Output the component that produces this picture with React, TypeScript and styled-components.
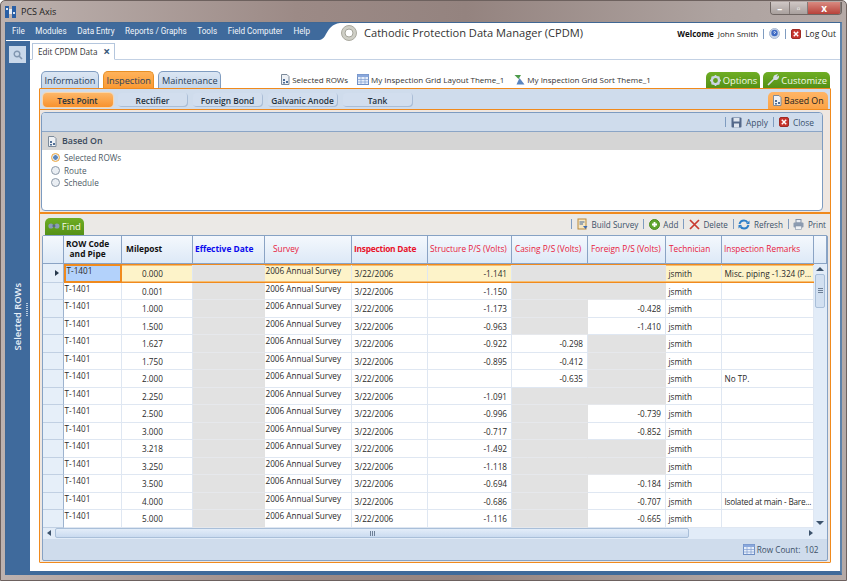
import React from "react";
import styled, { createGlobalStyle } from "styled-components";

const Global = createGlobalStyle`
  html, body { margin: 0; padding: 0; width: 847px; height: 581px; overflow: hidden; }
  body { font-family: "Open Sans", "Liberation Sans", sans-serif; color: #222; }
  * { box-sizing: border-box; }
`;

const Window = styled.div`
  width: 847px; height: 581px; display: flex; flex-direction: column;
  padding: 0 4px 5px 4px; border: 1px solid #6d615e; border-radius: 5px 5px 0 0;
  background: linear-gradient(90deg, #bdb2af 0%, #9c8a86 35%, #94837f 55%, #aea3a0 85%, #b5aaa7 100%);
`;
const TitleBar = styled.div`
  height: 21px; flex: none; display: flex; align-items: center; gap: 5px; font-size: 9px; color: #222;
`;
const TitleText = styled.span` flex: 1; `;
const WinControls = styled.div`
  display: flex; height: 13px; width: 72px; align-self: flex-start; border: 1px solid #6e6562; border-top: none;
  border-radius: 0 0 4px 4px; overflow: hidden; margin-right: 0; margin-top: 1px;
`;
const WinBtn = styled.div<{ $close?: boolean }>`
  flex: ${p => (p.$close ? 1.8 : 1)}; display: flex; align-items: center; justify-content: center;
  background: ${p => (p.$close ? "linear-gradient(#d98a80, #b8423a)" : "linear-gradient(#cfc7c5, #a9a09d)")};
  border-right: 1px solid #857b78; color: #fff; font-size: 10px; font-weight: 700;
`;
const Inner = styled.div`
  flex: 1; min-height: 0; display: flex; flex-direction: column; background: #fff;
  border: 1px solid #3f6794; border-right: 2px solid #5f83aa; border-bottom: 4px solid #3f6a9a;
`;
const TopBar = styled.div`
  height: 18px; flex: none; display: flex; align-items: stretch; background: #fff;
`;
const MenuWrap = styled.div` display: flex; flex: none; `;
const Menu = styled.nav`
  display: flex; align-items: center; gap: 10.6px; padding: 0 0 1px 6px; width: 312px; height: 17px; background: #3f6a9c;
`;
const MenuCurve = styled.svg` width: 22px; height: 17px; display: block; `;
const MenuItem = styled.span` color: #f2f6fb; font-family: Roboto, "Open Sans", sans-serif; font-size: 8.15px; white-space: nowrap; `;
const HeaderTitle = styled.div`
  flex: 1; display: flex; align-items: center; gap: 7px; padding: 1px 0 0 1px; font-size: 11.1px; color: #333; white-space: nowrap;
`;
const UserBox = styled.div`
  display: flex; align-items: center; gap: 4px; padding: 3px 4px 0 0; font-size: 8px; white-space: nowrap;
`;
const LogOut = styled.span` font-size: 8.4px; `;
const Bold = styled.b` font-weight: 700; color: #111; `;
const Pipe = styled.span` width: 1px; height: 10px; background: #7f9cc0; margin: 0 1px; `;
const Main = styled.div` flex: 1; min-height: 0; display: flex; `;
const Sidebar = styled.aside`
  width: 24px; flex: none; background: #3f6a9c; display: flex; flex-direction: column; align-items: flex-start; position: relative; padding: 5px 0 0 3px;
`;
const SearchBtn = styled.div`
  width: 17px; height: 17px; background: #c9d8ea; display: flex; align-items: center; justify-content: center;
`;
const SideLabel = styled.div`
  writing-mode: vertical-rl; transform: rotate(180deg); color: #e9f0f8; font-size: 9.4px; font-weight: 600; white-space: nowrap;
  margin: 220px 0 0 2px;
`;
const SideGrip = styled.div`
  position: absolute; right: 2px; top: 262px; height: 13px; width: 2px;
  background: repeating-linear-gradient(#b9cce0 0 1px, transparent 1px 2px);
`;
const Content = styled.div` flex: 1; min-width: 0; display: flex; flex-direction: column; `;
const DocTabs = styled.div`
  height: 19px; flex: none; display: flex; align-items: flex-end; padding-left: 2px; border-bottom: 1px solid #c3d1e4;
`;
const DocTab = styled.div`
  height: 17px; width: 83px; margin-bottom: -1px; background: #fff; border: 1px solid #b4c6dd; border-bottom: 1px solid #fff;
  display: flex; align-items: center; justify-content: space-between; padding: 0 4px 0 5px; font-size: 8.1px; color: #333;
`;
const DocClose = styled.span` font-size: 12px; font-weight: 700; color: #3c5a7c; line-height: 1; `;
const Work = styled.div`
  flex: 1; min-height: 0; display: flex; flex-direction: column; padding: 10px 9px 8px 9px;
`;
const TabLine = styled.div` height: 18px; flex: none; display: flex; align-items: flex-end; `;
const MainTab = styled.div<{ $active?: boolean; $ml?: number }>`
  height: 17px; padding: 0 2.5px; margin-left: ${p => p.$ml ?? 0}px; display: flex; align-items: center; font-size: 9.2px; border-radius: 5px 5px 0 0;
  border: 1px solid ${p => (p.$active ? "#e88f24" : "#7f9cc0")}; border-bottom: none; color: #2a3f5a;
  background: ${p => (p.$active ? "linear-gradient(#ffb25a, #fa9a34)" : "linear-gradient(#dbe6f3, #c5d6ea)")};
`;
const LinkItem = styled.div<{ $ml: number }>`
  display: flex; align-items: center; gap: 2px; margin-left: ${p => p.$ml}px; font-size: 8px; color: #333; white-space: nowrap; height: 17px; padding-bottom: 1px;
`;
const GreenTab = styled.div<{ $ml?: number }>`
  height: 16px; padding: 0 3px 0 4px; margin-left: ${p => p.$ml ?? 0}px; display: flex; align-items: center; gap: 2px; font-size: 9.4px; color: #f4fbe6;
  border-radius: 5px 5px 0 0; background: linear-gradient(#6fae24, #549016); white-space: nowrap;
`;
const Panel = styled.section`
  flex: 1; min-height: 0; display: flex; flex-direction: column; border: 1.5px solid #f08a1d; background: #efe7e1; border-radius: 1px;
`;
const SubBar = styled.div`
  height: 21px; flex: none; display: flex; align-items: flex-end; gap: 5px; padding: 0 2px 0 2.5px; background: #cfdcec; border-bottom: 1.5px solid #f08a1d;
`;
const SubTab = styled.div<{ $active?: boolean }>`
  width: 70px; height: 14px; margin-bottom: 2px; display: flex; align-items: center; justify-content: center; font-size: 8.4px; font-weight: 600; border-radius: 4px; color: #26333f;
  background: ${p => (p.$active ? "linear-gradient(#fdb768, #f8922e)" : "#d2deee")};
  box-shadow: ${p => (p.$active ? "0 0 1px 1px #fbd5a8" : "inset -1px -1px 0 #a9bdd6")};
`;
const BasedTab = styled.div`
  margin-left: auto; height: 17px; width: 60px; flex: none; display: flex; align-items: center; gap: 2px; padding-left: 4px; font-size: 8.8px; color: #222; white-space: nowrap;
  border-radius: 5px 5px 0 0; background: linear-gradient(#ffb566, #fba346);
`;
const BasedPanel = styled.div`
  height: 99px; flex: none; margin: 2px 7px 0 1px; border: 1.5px solid #7d9bc0; border-radius: 4px; background: #fff; display: flex; flex-direction: column; overflow: hidden;
`;
const BasedTools = styled.div`
  height: 19px; flex: none; background: #cfdcec; display: flex; align-items: center; justify-content: flex-end; gap: 4px; padding-right: 8px; border-bottom: 1px solid #8ba5c6; font-size: 8.4px; color: #38506c;
`;
const Section = styled.div`
  height: 18px; flex: none; background: #d5d5d5; display: flex; align-items: center; gap: 5px; padding-left: 5px; font-size: 8.8px; font-weight: 600; color: #3a4a5c;
`;
const Radios = styled.div` display: flex; flex-direction: column; gap: 3.6px; padding: 3px 0 0 9px; `;
const RadioRow = styled.div` display: flex; align-items: center; gap: 4px; font-size: 8.2px; color: #4e5a66; height: 9px; `;
const Radio = styled.span<{ $on?: boolean }>`
  width: 9px; height: 9px; border-radius: 50%; flex: none;
  border: 1px solid ${p => (p.$on ? "#f0a63c" : "#8c99a8")};
  background: ${p => (p.$on ? "radial-gradient(#5c86bc 0 2px, #dfe8f2 2.5px)" : "#eaeef3")};
`;
const Divider = styled.div` height: 1.5px; flex: none; margin-top: 1px; background: #f08a1d; `;
const ToolBar = styled.div`
  height: 21px; flex: none; display: flex; align-items: center; padding: 0 4px 0 5px; background: #ebe9e6;
`;
const FindTab = styled(GreenTab)` height: 17px; width: 39px; padding: 0 3px; align-self: flex-end; font-size: 9.6px; gap: 2px; `;
const ToolActions = styled.div` margin-left: auto; display: flex; align-items: center; gap: 3.7px; font-size: 8.1px; color: #3c5068; `;
const GridBox = styled.div`
  flex: 1; min-height: 0; margin: 0 2.5px 1px 2px; border: 1.5px solid #86a2c4; border-radius: 2px; background: #cfdcec; display: flex; flex-direction: column;
`;
const cols = "21px 58px 71px 72px 87px 76px 84px 76px 78px 56px 92px 1fr";
const HeadRow = styled.div`
  height: 28px; flex: none; display: grid; grid-template-columns: ${cols}; background: linear-gradient(#f4f8fd, #dde9f7); border-bottom: 1px solid #8aa3c4;
`;
const HeadCell = styled.div<{ $color?: string; $bold?: boolean; $pl?: number; $tight?: boolean }>`
  display: flex; align-items: center; justify-content: flex-start; text-align: center;
  padding-left: ${p => p.$pl ?? 2}px; font-size: ${p => (p.$bold ? 8.4 : 8.3)}px; line-height: 10.5px;
  letter-spacing: ${p => (p.$tight ? "-0.25px" : "0")};
  font-weight: ${p => (p.$bold ? 700 : 500)}; color: ${p => p.$color ?? "#111"}; border-right: 1px solid #8aa3c4; white-space: nowrap;
`;
const BodyWrap = styled.div` height: 264px; flex: none; display: flex; background: #fff; `;
const Rows = styled.div` width: 771px; flex: none; display: flex; flex-direction: column; `;
const DataRow = styled.div<{ $sel?: boolean }>`
  height: ${p => (p.$sel ? 19 : 17.5)}px; flex: none; display: grid; grid-template-columns: 21px 58px 71px 72px 87px 76px 84px 76px 78px 56px 92px;
  background: ${p => (p.$sel ? "#fdf3c9" : "#fff")}; position: relative;
  box-shadow: ${p => (p.$sel ? "inset 0 1.5px 0 #f08a1d, inset 0 -1.5px 0 #f08a1d" : "none")};
`;
const RowHead = styled.div`
  display: flex; align-items: center; justify-content: flex-end; padding-right: 4px; background: #e6eff9; border-bottom: 1px solid #c1d0e3; border-right: 1px solid #9db3cf;
`;
const RowArrow = styled.span`
  width: 0; height: 0; border-left: 4px solid #27384c; border-top: 3px solid transparent; border-bottom: 3px solid transparent;
`;
const Cell = styled.div<{ $align?: "l" | "r" | "m"; $grey?: boolean; $raise?: boolean; $current?: boolean; $sel?: boolean; $tight?: boolean }>`
  font-size: 8.2px; white-space: nowrap; overflow: hidden; color: #2a2a2a; display: flex; align-items: center;
  letter-spacing: ${p => (p.$tight ? "-0.22px" : "0")};
  justify-content: ${p => (p.$align === "r" ? "flex-end" : "flex-start")};
  padding: ${p => (p.$raise ? "0 0 5px 0" : "1px 0 0 0")};
  padding-left: ${p => (p.$align === "m" ? "20px" : p.$raise ? "0.5px" : "2.5px")};
  padding-right: ${p => (p.$align === "r" ? "4px" : "0")};
  background: ${p => (p.$current ? "#b3d2fb" : p.$grey ? "#e2e2e2" : "transparent")};
  border-right: 1px solid ${p => (p.$grey ? "#e2e2e2" : "#dfe7f2")};
  border-bottom: ${p => (p.$sel ? "0" : `1.5px solid ${p.$grey ? "#e6e8ec" : "#dfe7f2"}`)};
  margin: ${p => (p.$sel && !p.$current ? "1.5px 0" : "0")};
  ${p => p.$current && "border: 2px solid #f08a1d; margin: 0;"}
`;
const VScroll = styled.div`
  flex: 1; background: #e2ecf8; display: flex; flex-direction: column; align-items: center; padding-top: 3px; position: relative;
`;
const ArrowUp = styled.span` width: 0; height: 0; border-bottom: 4px solid #3d536c; border-left: 4px solid transparent; border-right: 4px solid transparent; `;
const ArrowDown = styled.span` width: 0; height: 0; margin-top: auto; margin-bottom: 3px; border-top: 4px solid #3d536c; border-left: 4px solid transparent; border-right: 4px solid transparent; `;
const VThumb = styled.div`
  width: 10px; height: 34px; margin-top: 3px; border: 1px solid #a9bfd9; border-radius: 2px; background: #d2e0f1; display: flex; align-items: center; justify-content: center;
`;
const VGrip = styled.span` width: 5px; height: 5px; background: repeating-linear-gradient(#6e8097 0 1px, transparent 1px 2px); `;
const HScroll = styled.div`
  height: 11px; flex: none; background: #e2ecf8; display: flex; align-items: center; padding: 0 4px 0 4px; gap: 4px;
`;
const ArrowLeft = styled.span` width: 0; height: 0; border-right: 4px solid #3d536c; border-top: 3px solid transparent; border-bottom: 3px solid transparent; `;
const ArrowRight = styled.span` margin-left: auto; margin-right: 10px; width: 0; height: 0; border-left: 4px solid #3d536c; border-top: 3px solid transparent; border-bottom: 3px solid transparent; `;
const HThumb = styled.div`
  width: 634px; height: 10px; border: 1px solid #a9bfd9; border-radius: 2px; background: linear-gradient(#e3edf9, #cadbf0); display: flex; align-items: center; justify-content: center;
`;
const HGrip = styled.span` width: 5px; height: 5px; background: repeating-linear-gradient(90deg, #6e8097 0 1px, transparent 1px 2px); `;
const Status = styled.div`
  flex: 1; display: flex; align-items: center; justify-content: flex-end; gap: 2px; padding: 1px 8px 0 0; font-size: 8.2px; color: #3c5068;
`;
const Count = styled.span` margin-left: 2px; `;

const AppIcon = () => (
  <svg width="11" height="12" viewBox="0 0 11 12"><rect x="0" y="0" width="4" height="12" fill="#2a5fa5"/><rect x="7" y="0" width="4" height="12" fill="#2a5fa5"/><rect x="4" y="3" width="3" height="5" fill="#e8eef6"/><rect x="1" y="2" width="2" height="2" fill="#dfe8f4"/><rect x="8" y="6" width="2" height="2" fill="#dfe8f4"/></svg>
);
const Medallion = () => (
  <svg width="16" height="16" viewBox="0 0 16 16"><circle cx="8" cy="8" r="7.5" fill="#cfcfc6" stroke="#aaa99f"/><circle cx="8" cy="8" r="4" fill="#fff" stroke="#a5a49a"/></svg>
);
const HelpIcon = () => (
  <svg width="11" height="11" viewBox="0 0 11 11"><circle cx="5.5" cy="5.5" r="5" fill="#c9d6ea" stroke="#a9b8d2"/><circle cx="5.5" cy="5" r="3.2" fill="#3f6bc4"/><path d="M4.5 4.2 Q5.5 3 6.5 4.2 Q6.5 5 5.5 5.3 V6" stroke="#fff" fill="none" strokeWidth=".8"/></svg>
);
const RedX = () => (
  <svg width="10" height="10" viewBox="0 0 10 10"><rect x=".5" y=".5" width="9" height="9" rx="1.5" fill="#c8342c" stroke="#9e2a24"/><path d="M2.8 2.8 7.2 7.2 M7.2 2.8 2.8 7.2" stroke="#fff" strokeWidth="1.5"/></svg>
);
const DocIcon = () => (
  <svg width="10" height="11" viewBox="0 0 10 11"><path d="M1.5.5H7L9 2.5V10.5H1.5Z" fill="#eef1f5" stroke="#7c8a9a"/><path d="M3 5H5V7H3ZM6 7H8V9H6ZM3 8H5V9.5H3Z" fill="#4f6e96"/></svg>
);
const GridIcon = () => (
  <svg width="12" height="11" viewBox="0 0 12 11"><rect x=".5" y=".5" width="11" height="10" fill="#e6eefa" stroke="#6f8fc4"/><rect x=".5" y=".5" width="11" height="2.5" fill="#8aa8dc"/><path d="M4 3V10.5M8 3V10.5M.5 5.5H11.5M.5 8H11.5" stroke="#7f9dd0" strokeWidth=".7"/></svg>
);
const Funnel = () => (
  <svg width="11" height="11" viewBox="0 0 11 11"><path d="M.5 1H7L4.5 5Z" fill="#4d9a4a"/><path d="M5.5 4 10.5 10.5H2.5Z" fill="#5a85c0"/></svg>
);
const Gear = () => (
  <svg width="11" height="11" viewBox="0 0 11 11"><circle cx="5.5" cy="5.5" r="3.6" fill="none" stroke="#c9d4e2" strokeWidth="2.4"/><path d="M5.5 0V2M5.5 9V11M0 5.5H2M9 5.5H11M1.6 1.6 3 3M8 8 9.4 9.4M1.6 9.4 3 8M8 3 9.4 1.6" stroke="#c9d4e2" strokeWidth="1.5"/></svg>
);
const Wrench = () => (
  <svg width="12" height="12" viewBox="0 0 12 12"><path d="M1 11 6.5 5.5M7 5Q6.5 2 9.5 1.2L8.5 3.2 9.5 4 11.2 3Q10.5 6 7 5Z" stroke="#d5dce6" strokeWidth="1.6" fill="#d5dce6"/></svg>
);
const Save = () => (
  <svg width="11" height="11" viewBox="0 0 11 11"><rect x=".5" y=".5" width="10" height="10" rx="1" fill="#55698a"/><rect x="2.5" y="1" width="6" height="3.5" fill="#dfe5ee"/><rect x="3" y="6.5" width="5" height="4" fill="#dfe5ee"/></svg>
);
const Binoc = () => (
  <svg width="13" height="8" viewBox="0 0 13 8"><circle cx="3.2" cy="4" r="2.8" fill="#8a9db8"/><circle cx="9.8" cy="4" r="2.8" fill="#8a9db8"/><rect x="5" y="2.5" width="3" height="2.5" fill="#56697f"/></svg>
);
const Build = () => (
  <svg width="11" height="12" viewBox="0 0 11 12"><rect x="1" y="1" width="8" height="10" fill="#f6e7c4" stroke="#b98a3c"/><path d="M2.5 4H7.5M2.5 6H6" stroke="#44689a"/><path d="M6 8H10.5L8.5 11Z" fill="#3f6bb0"/></svg>
);
const Plus = () => (
  <svg width="11" height="11" viewBox="0 0 11 11"><circle cx="5.5" cy="5.5" r="5" fill="#5fa52e" stroke="#4a8a20"/><path d="M3 5.5H8M5.5 3V8" stroke="#fff" strokeWidth="1.8"/></svg>
);
const Cross = () => (
  <svg width="11" height="11" viewBox="0 0 11 11"><path d="M1 1 10 10M10 1 1 10" stroke="#c8392f" strokeWidth="1.7"/></svg>
);
const Refresh = () => (
  <svg width="12" height="11" viewBox="0 0 12 11"><path d="M1.5 5Q2.5 1.5 6 1.5Q8.5 1.5 9.5 3.5M10.5 6Q9.5 9.5 6 9.5Q3.5 9.5 2.5 7.5" fill="none" stroke="#2e7fc8" strokeWidth="2"/><path d="M11.5 1.5V5H8ZM.5 9.5V6H4Z" fill="#2e7fc8"/></svg>
);
const Printer = () => (
  <svg width="11" height="11" viewBox="0 0 11 11"><rect x="3" y=".5" width="5" height="3.5" fill="#e8ecf2" stroke="#8593a6"/><rect x=".5" y="3.5" width="10" height="5" rx="1" fill="#8c9bb0"/><rect x="2.5" y="7" width="6" height="3.5" fill="#eef1f5" stroke="#8593a6" strokeWidth=".6"/></svg>
);
const Search = () => (
  <svg width="10" height="10" viewBox="0 0 10 10"><circle cx="4" cy="4" r="2.8" fill="none" stroke="#8196b0" strokeWidth="1.4"/><path d="M6 6 9 9" stroke="#8196b0" strokeWidth="1.6"/></svg>
);

type R = { m: string; s?: string; c?: string; f?: string; cg?: boolean; fg?: boolean; note?: string; tight?: boolean };
const rows: R[] = [
  { m: "0.000", s: "-1.141", cg: true, fg: true, note: "Misc. piping -1.324 (P..." },
  { m: "0.001", s: "-1.150", cg: true, fg: true },
  { m: "1.000", s: "-1.173", cg: true, f: "-0.428" },
  { m: "1.500", s: "-0.963", cg: true, f: "-1.410" },
  { m: "1.627", s: "-0.922", c: "-0.298", fg: true },
  { m: "1.750", s: "-0.895", c: "-0.412", fg: true },
  { m: "2.000", c: "-0.635", fg: true, note: "No TP." },
  { m: "2.250", s: "-1.091", cg: true, fg: true },
  { m: "2.500", s: "-0.996", cg: true, f: "-0.739" },
  { m: "3.000", s: "-0.717", cg: true, f: "-0.852" },
  { m: "3.218", s: "-1.492", cg: true, fg: true },
  { m: "3.250", s: "-1.118", cg: true, fg: true },
  { m: "3.500", s: "-0.694", cg: true, f: "-0.184" },
  { m: "4.000", s: "-0.686", cg: true, f: "-0.707", note: "Isolated at main - Bare...", tight: true },
  { m: "5.000", s: "-1.116", cg: true, f: "-0.665" },
];

export default function App() {
  return (
    <Window>
      <Global />
      <TitleBar>
        <AppIcon />
        <TitleText>PCS Axis</TitleText>
        <WinControls>
          <WinBtn>–</WinBtn>
          <WinBtn>▫</WinBtn>
          <WinBtn $close>x</WinBtn>
        </WinControls>
      </TitleBar>
      <Inner>
        <TopBar>
          <MenuWrap>
            <Menu>
              {["File", "Modules", "Data Entry", "Reports / Graphs", "Tools", "Field Computer", "Help"].map(m => (
                <MenuItem key={m}>{m}</MenuItem>
              ))}
            </Menu>
            <MenuCurve viewBox="0 0 22 17"><path d="M0 0H22C14 1 11 6 8 11C6 15 4 17 0 17Z" fill="#3f6a9c" /></MenuCurve>
          </MenuWrap>
          <HeaderTitle>
            <Medallion />
            Cathodic Protection Data Manager (CPDM)
          </HeaderTitle>
          <UserBox>
            <Bold>Welcome</Bold> John Smith
            <Pipe /><HelpIcon /><Pipe /><RedX />
            <LogOut>Log Out</LogOut>
          </UserBox>
        </TopBar>
        <Main>
          <Sidebar>
            <SearchBtn><Search /></SearchBtn>
            <SideLabel>Selected ROWs</SideLabel>
            <SideGrip />
          </Sidebar>
          <Content>
            <DocTabs>
              <DocTab>Edit CPDM Data <DocClose>×</DocClose></DocTab>
            </DocTabs>
            <Work>
              <TabLine>
                <MainTab $ml={2}>Information</MainTab>
                <MainTab $ml={4} $active>Inspection</MainTab>
                <MainTab $ml={4}>Maintenance</MainTab>
                <LinkItem $ml={59}><DocIcon />Selected ROWs</LinkItem>
                <LinkItem $ml={9}><GridIcon />My Inspection Grid Layout Theme_1</LinkItem>
                <LinkItem $ml={10}><Funnel />My Inspection Grid Sort Theme_1</LinkItem>
                <GreenTab $ml={55}><Gear />Options</GreenTab>
                <GreenTab $ml={3}><Wrench />Customize</GreenTab>
              </TabLine>
              <Panel>
                <SubBar>
                  <SubTab $active>Test Point</SubTab>
                  <SubTab>Rectifier</SubTab>
                  <SubTab>Foreign Bond</SubTab>
                  <SubTab>Galvanic Anode</SubTab>
                  <SubTab>Tank</SubTab>
                  <BasedTab><DocIcon />Based On</BasedTab>
                </SubBar>
                <BasedPanel>
                  <BasedTools>
                    <Pipe /><Save /> Apply <Pipe /><RedX /> Close
                  </BasedTools>
                  <Section><DocIcon />Based On</Section>
                  <Radios>
                    <RadioRow><Radio $on />Selected ROWs</RadioRow>
                    <RadioRow><Radio />Route</RadioRow>
                    <RadioRow><Radio />Schedule</RadioRow>
                  </Radios>
                </BasedPanel>
                <Divider />
                <ToolBar>
                  <FindTab><Binoc />Find</FindTab>
                  <ToolActions>
                    <Pipe /><Build />Build Survey<Pipe /><Plus />Add<Pipe /><Cross />Delete<Pipe /><Refresh />Refresh<Pipe /><Printer />Print
                  </ToolActions>
                </ToolBar>
                <GridBox>
                  <HeadRow>
                    <HeadCell />
                    <HeadCell $bold>ROW Code<br />and Pipe</HeadCell>
                    <HeadCell $bold $pl={4}>Milepost</HeadCell>
                    <HeadCell $bold $color="#0a0aee">Effective Date</HeadCell>
                    <HeadCell $color="#e8203c" $pl={8}>Survey</HeadCell>
                    <HeadCell $bold $tight $color="#e8142c">Inspection Date</HeadCell>
                    <HeadCell $color="#e8203c">Structure P/S (Volts)</HeadCell>
                    <HeadCell $color="#e8203c" $pl={3}>Casing P/S (Volts)</HeadCell>
                    <HeadCell $color="#e8203c" $pl={3}>Foreign P/S (Volts)</HeadCell>
                    <HeadCell $color="#e8203c" $pl={3}>Technician</HeadCell>
                    <HeadCell $color="#e8203c">Inspection Remarks</HeadCell>
                    <HeadCell />
                  </HeadRow>
                  <BodyWrap>
                    <Rows>
                      {rows.map((r, i) => {
                        const sel = i === 0;
                        return (
                          <DataRow key={r.m} $sel={sel}>
                            <RowHead>{sel && <RowArrow />}</RowHead>
                            <Cell $raise $current={sel}>T-1401</Cell>
                            <Cell $align="m" $sel={sel}>{r.m}</Cell>
                            <Cell $grey $sel={sel} />
                            <Cell $raise $sel={sel}>2006 Annual Survey</Cell>
                            <Cell $sel={sel}>3/22/2006</Cell>
                            <Cell $align="r" $sel={sel}>{r.s}</Cell>
                            <Cell $align="r" $grey={r.cg} $sel={sel}>{r.c}</Cell>
                            <Cell $align="r" $grey={r.fg} $sel={sel}>{r.f}</Cell>
                            <Cell $sel={sel}>jsmith</Cell>
                            <Cell $sel={sel} $tight={r.tight}>{r.note}</Cell>
                          </DataRow>
                        );
                      })}
                    </Rows>
                    <VScroll>
                      <ArrowUp />
                      <VThumb><VGrip /></VThumb>
                      <ArrowDown />
                    </VScroll>
                  </BodyWrap>
                  <HScroll>
                    <ArrowLeft />
                    <HThumb><HGrip /></HThumb>
                    <ArrowRight />
                  </HScroll>
                  <Status><GridIcon />Row Count: <Count>102</Count></Status>
                </GridBox>
              </Panel>
            </Work>
          </Content>
        </Main>
      </Inner>
    </Window>
  );
}
